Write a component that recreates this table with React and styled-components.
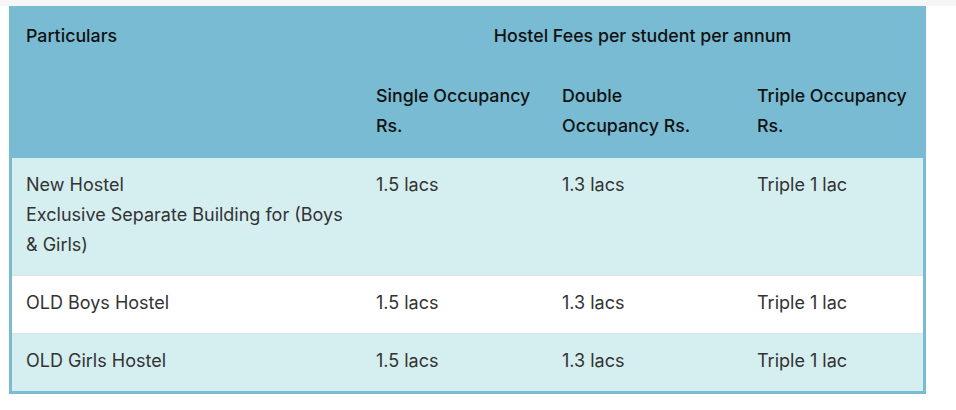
import React from "react";
import styled, { createGlobalStyle } from "styled-components";

const Global = createGlobalStyle`
  html, body { margin: 0; padding: 0; }
  body {
    background: linear-gradient(#f6f6f6 0 6px, #ffffff 6px);
    font-family: "Inter", "Liberation Sans", sans-serif;
    font-size: 18px;
  }
`;

const Page = styled.div`
  width: 956px;
  height: 410px;
  padding: 6px 0 0 9px;
  box-sizing: border-box;
`;

const Table = styled.table`
  width: 917px;
  border-collapse: separate;
  border-spacing: 0;
  border: 3px solid #79bbd3;
  table-layout: fixed;
`;

const HeadRow = styled.tr`
  background: #79bbd3;
`;

const Th = styled.th`
  font-weight: 500;
  font-size: 17.8px;
  color: #111;
  line-height: 30px;
  text-align: ${(p) => (p.$center ? "center" : "left")};
  padding: ${(p) => (p.$tall ? "17px 14px 17px" : "12px 14px 13px")};
  vertical-align: top;
`;

const BodyRow = styled.tr`
  background: ${(p) => (p.$alt ? "#d5eef0" : "#ffffff")};
`;

const Td = styled.td`
  color: #333;
  line-height: 30px;
  padding: 12px 14px 15px;
  vertical-align: top;
  border-top: ${(p) => (p.$first ? "none" : "1px solid #dee2e6")};
`;

const rows = [
  { name: ["New Hostel", "Exclusive Separate Building for (Boys & Girls)"], alt: true },
  { name: ["OLD Boys Hostel"], alt: false },
  { name: ["OLD Girls Hostel"], alt: true },
];

export default function App() {
  return (
    <>
      <Global />
      <Page>
        <Table>
          <colgroup>
            <col style={{ width: 350 }} />
            <col style={{ width: 186 }} />
            <col style={{ width: 195 }} />
            <col style={{ width: 180 }} />
          </colgroup>
          <thead>
            <HeadRow>
              <Th>Particulars</Th>
              <Th colSpan={3} $center>
                Hostel Fees per student per annum
              </Th>
            </HeadRow>
            <HeadRow>
              <Th $tall></Th>
              <Th $tall>Single Occupancy Rs.</Th>
              <Th $tall>
                Double
                <br />
                Occupancy Rs.
              </Th>
              <Th $tall>Triple Occupancy Rs.</Th>
            </HeadRow>
          </thead>
          <tbody>
            {rows.map((r, i) => (
              <BodyRow key={i} $alt={r.alt}>
                <Td $first={i === 0}>
                  {r.name.map((n, j) => (
                    <React.Fragment key={j}>
                      {j > 0 && <br />}
                      {n}
                    </React.Fragment>
                  ))}
                </Td>
                <Td $first={i === 0}>1.5 lacs</Td>
                <Td $first={i === 0}>1.3 lacs</Td>
                <Td $first={i === 0}>Triple 1 lac</Td>
              </BodyRow>
            ))}
          </tbody>
        </Table>
      </Page>
    </>
  );
}
